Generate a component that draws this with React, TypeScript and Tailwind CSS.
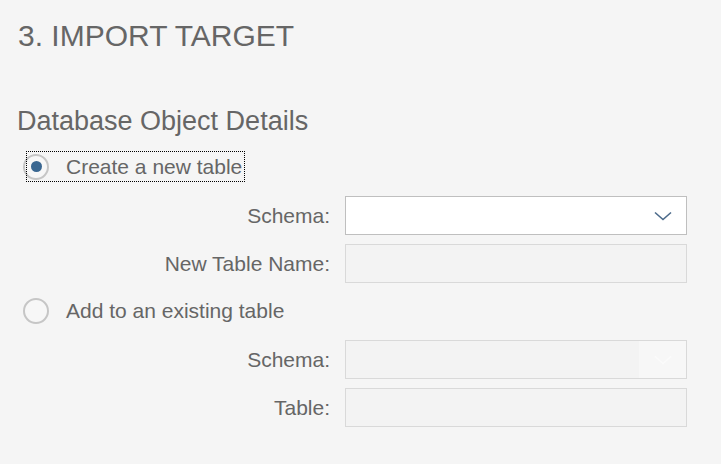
import React from "react";

function Chevron({ color }: { color: string }) {
  return (
    <svg width="18" height="10" viewBox="0 0 18 10" fill="none">
      <path d="M1 1.5 L9 8.5 L17 1.5" stroke={color} strokeWidth="1.6" />
    </svg>
  );
}

function Radio({ checked }: { checked: boolean }) {
  return (
    <span className="flex h-[26px] w-[26px] shrink-0 items-center justify-center rounded-full border-2 border-[#c6c6c6] bg-[#f7f7f7]">
      {checked && <span className="h-[11px] w-[11px] rounded-full bg-[#3a6791]" />}
    </span>
  );
}

function Select({ disabled }: { disabled?: boolean }) {
  return disabled ? (
    <div className="flex h-[39px] w-[342px] border border-[#d9d9d9] bg-[#f3f3f3]">
      <div className="flex-1" />
      <div className="flex w-[47px] items-center justify-center bg-[#f7f7f7]">
        <Chevron color="#fbfbfb" />
      </div>
    </div>
  ) : (
    <div className="flex h-[39px] w-[342px] border border-[#bfbfbf] bg-white">
      <div className="flex-1" />
      <div className="flex w-[47px] items-center justify-center">
        <Chevron color="#4b6a8a" />
      </div>
    </div>
  );
}

function Input() {
  return <div className="h-[39px] w-[342px] border border-[#d9d9d9] bg-[#f3f3f3]" />;
}

function Row({ label, children }: { label: string; children: React.ReactNode }) {
  return (
    <div className="flex items-center">
      <div className="w-[313px] text-right text-[21px] leading-[39px]">{label}</div>
      <div className="ml-[15px]">{children}</div>
    </div>
  );
}

export default function App() {
  return (
    <div className="min-h-[464px] w-[721px] bg-[#f5f5f5] pl-[17px] pt-[18px] font-['Liberation_Sans',Arial,sans-serif] text-[#666666]">
      <h1 className="ml-[1px] text-[30px] leading-[36px]">3. IMPORT TARGET</h1>
      <h2 className="mt-[51px] text-[27px] leading-[32px]">Database Object Details</h2>

      <div className="relative ml-[6px] mt-[14px] flex h-[31px] w-[222px] items-center">
        <Radio checked />
        <span className="ml-[17px] text-[21px] leading-[31px]">Create a new table</span>
        <span className="pointer-events-none absolute inset-y-0 left-[3px] right-[0px] border border-dotted border-black" />
      </div>

      <div className="mt-[14px] flex flex-col gap-[9px]">
        <Row label="Schema:">
          <Select />
        </Row>
        <Row label="New Table Name:">
          <Input />
        </Row>
      </div>

      <div className="ml-[6px] mt-[12px] flex h-[31px] items-center">
        <Radio checked={false} />
        <span className="ml-[17px] text-[21px] leading-[31px]">Add to an existing table</span>
      </div>

      <div className="mt-[14px] flex flex-col gap-[9px] pb-[37px]">
        <Row label="Schema:">
          <Select disabled />
        </Row>
        <Row label="Table:">
          <Input />
        </Row>
      </div>
    </div>
  );
}
